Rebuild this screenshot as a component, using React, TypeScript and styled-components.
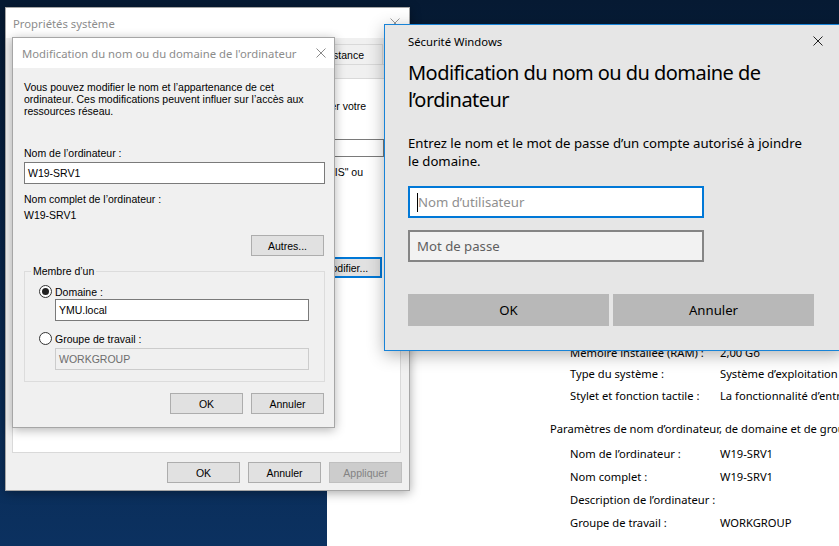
import React from "react";
import styled, { createGlobalStyle } from "styled-components";

const SEGOE = `"Noto Sans", "Open Sans", sans-serif`;
const CLASSIC = `"Liberation Sans", Arial, sans-serif`;

const GlobalStyle = createGlobalStyle`
  html, body { margin: 0; padding: 0; overflow: hidden; background: #0a2748; }
  *, *::before, *::after { box-sizing: border-box; }
`;

const Desktop = styled.div`
  position: relative;
  width: 839px;
  height: 546px;
  overflow: hidden;
  background: linear-gradient(180deg, #061a33 0%, #09264b 50%, #0b3160 100%);
`;

/* ---------------- generic bits ---------------- */
const CloseIcon = ({ color }: { color: string }) => (
  <svg width="10" height="10" viewBox="0 0 10 10" aria-hidden>
    <path d="M0.5 0.5 L9.5 9.5 M9.5 0.5 L0.5 9.5" stroke={color} strokeWidth="1" fill="none" />
  </svg>
);

const CloseBox = styled.span`
  display: inline-flex;
  width: 10px;
  height: 10px;
  flex: none;
`;

/* ---------------- background "Système" window ---------------- */
const SystemWindow = styled.section`
  position: absolute;
  left: 327px;
  top: 30px;
  width: 560px;
  height: 540px;
  background: #fff;
  font-family: ${SEGOE};
  font-size: 11.2px;
  color: #000;
  padding: 290px 0 0 223px;
  display: flex;
  flex-direction: column;
`;

const InfoRow = styled.div<{ $h: number }>`
  display: grid;
  grid-template-columns: 150px auto;
  height: ${(p) => p.$h}px;
  align-items: center;
  padding-left: 20px;
  white-space: nowrap;
`;

const InfoHeader = styled.div`
  height: 23px;
  line-height: 23px;
  margin: 11px 0 2px;
  white-space: nowrap;
`;

/* ---------------- classic dialog shared ---------------- */
const TitleBar = styled.div<{ $pl: number; $pr: number }>`
  flex: none;
  height: 30px;
  background: #fff;
  display: flex;
  align-items: center;
  justify-content: space-between;
  padding: 0 ${(p) => p.$pr}px 0 ${(p) => p.$pl}px;
`;

const TitleText = styled.span`
  font-family: ${SEGOE};
  font-size: 11.3px;
  color: #8c8c8c;
  white-space: nowrap;
`;

const Button = styled.div<{ $disabled?: boolean; $focused?: boolean }>`
  width: 73px;
  height: 21px;
  flex: none;
  display: flex;
  align-items: center;
  justify-content: center;
  background: ${(p) => (p.$disabled ? "#cccccc" : "#e1e1e1")};
  border: 1px solid ${(p) => (p.$focused ? "#0078d7" : p.$disabled ? "#bfbfbf" : "#adadad")};
  box-shadow: ${(p) => (p.$focused ? "inset 0 0 0 1px #0078d7" : "none")};
  color: ${(p) => (p.$disabled ? "#838383" : "#000")};
  font-family: ${CLASSIC};
  font-size: 10.5px;
`;

const ButtonRow = styled.div<{ $mt: number; $mr?: number }>`
  display: flex;
  justify-content: flex-end;
  gap: 8px;
  margin-top: ${(p) => p.$mt}px;
  margin-right: ${(p) => p.$mr ?? 0}px;
`;

const TextBox = styled.div<{ $w?: number; $h: number; $mt?: number; $disabled?: boolean }>`
  width: ${(p) => (p.$w ? `${p.$w}px` : "100%")};
  height: ${(p) => p.$h}px;
  margin-top: ${(p) => p.$mt ?? 0}px;
  flex: none;
  display: flex;
  align-items: center;
  padding-left: 3px;
  background: ${(p) => (p.$disabled ? "#f0f0f0" : "#fff")};
  border: 1px solid ${(p) => (p.$disabled ? "#cccccc" : "#7a7a7a")};
  color: ${(p) => (p.$disabled ? "#6d6d6d" : "#000")};
  font-family: ${CLASSIC};
  font-size: 10.5px;
  white-space: nowrap;
  overflow: hidden;
`;

const Label = styled.div<{ $mt: number }>`
  margin-top: ${(p) => p.$mt}px;
  line-height: 13px;
  height: 13px;
  white-space: nowrap;
`;

/* ---------------- Propriétés système ---------------- */
const PropsWindow = styled.section`
  position: absolute;
  left: 5px;
  top: 7px;
  width: 405px;
  height: 484px;
  background: #f0f0f0;
  border: 1px solid #a6a6a6;
  box-shadow: 0 2px 10px rgba(0, 0, 0, 0.35);
  display: flex;
  flex-direction: column;
  font-family: ${CLASSIC};
  font-size: 10.5px;
  color: #000;
`;

const PropsBody = styled.div`
  flex: 1;
  display: flex;
  flex-direction: column;
  padding: 6px 7px 0 6px;
`;

const TabRow = styled.div<{ $h: number; $pr: number; $justify: string }>`
  display: flex;
  justify-content: ${(p) => p.$justify};
  height: ${(p) => p.$h}px;
  padding-right: ${(p) => p.$pr}px;
`;

const Tab = styled.div<{ $selected?: boolean; $grow?: boolean; $padR?: number }>`
  flex: ${(p) => (p.$grow ? 1 : "none")};
  display: flex;
  align-items: center;
  padding: 0 ${(p) => p.$padR ?? 7}px 0 7px;
  background: ${(p) => (p.$selected ? "#fff" : "#f0f0f0")};
  border: 1px solid #d9d9d9;
  border-bottom: none;
  margin-right: -1px;
  white-space: nowrap;
  overflow: hidden;
`;

const TabPage = styled.div`
  height: 375px;
  margin-right: 1px;
  background: #fff;
  border: 1px solid #d9d9d9;
  display: flex;
  flex-direction: column;
  padding: 21px 18px 0 12px;
`;

const PageText = styled.div<{ $mt?: number; $mr: number }>`
  align-self: flex-end;
  margin-top: ${(p) => p.$mt ?? 0}px;
  margin-right: ${(p) => p.$mr}px;
  line-height: 13px;
  white-space: nowrap;
`;

const PageRow = styled.div<{ $mt: number }>`
  display: flex;
  align-items: center;
  justify-content: space-between;
  margin-top: ${(p) => p.$mt}px;
  white-space: nowrap;
`;

const SmallBox = styled.div`
  width: 222px;
  height: 18px;
  border: 1px solid #7a7a7a;
  background: #fff;
  margin-right: -2px;
`;

/* ---------------- Modification dialog ---------------- */
const ModWindow = styled.section`
  position: absolute;
  left: 12px;
  top: 37px;
  width: 323px;
  height: 391px;
  background: #f0f0f0;
  border: 1px solid #a6a6a6;
  box-shadow: 0 2px 10px rgba(0, 0, 0, 0.3);
  display: flex;
  flex-direction: column;
  font-family: ${CLASSIC};
  font-size: 10.5px;
  color: #000;
`;

const ModBody = styled.div`
  flex: 1;
  display: flex;
  flex-direction: column;
  padding: 13px 9px 0 11px;
`;

const Paragraph = styled.p`
  margin: 0;
  line-height: 12px;
  white-space: nowrap;
`;

const GroupBox = styled.fieldset`
  margin: 9px 0 0;
  padding: 7px 14px 11px;
  border: 1px solid #dcdcdc;
  min-width: 0;
  display: flex;
  flex-direction: column;
`;

const Legend = styled.legend`
  margin-left: -8px;
  padding: 0 2px;
  line-height: 13px;
  font-size: 10.5px;
`;

const RadioRow = styled.div<{ $mt: number }>`
  display: flex;
  align-items: center;
  gap: 3px;
  height: 13px;
  margin-top: ${(p) => p.$mt}px;
  white-space: nowrap;
`;

const Radio = styled.span<{ $checked?: boolean }>`
  width: 13px;
  height: 13px;
  flex: none;
  border-radius: 50%;
  border: 1px solid #333;
  background: #fff;
  display: inline-flex;
  align-items: center;
  justify-content: center;
  &::after {
    content: "";
    width: 7px;
    height: 7px;
    border-radius: 50%;
    background: #222;
    display: ${(p) => (p.$checked ? "block" : "none")};
  }
`;

const Indented = styled.div<{ $mt: number }>`
  margin-top: ${(p) => p.$mt}px;
  padding-left: 16px;
`;

/* ---------------- Sécurité Windows ---------------- */
const SecurityWindow = styled.section`
  position: absolute;
  left: 384px;
  top: 24px;
  width: 460px;
  height: 327px;
  background: #e6e6e6;
  border: 1px solid #1883d7;
  box-shadow: 0 4px 16px rgba(0, 0, 0, 0.3);
  display: flex;
  flex-direction: column;
  padding: 6px 20px 0 23px;
  font-family: ${SEGOE};
  color: #000;
`;

const SecTitleRow = styled.div`
  display: flex;
  align-items: center;
  justify-content: space-between;
  height: 20px;
  font-size: 11.3px;
`;

const SecHeading = styled.h1`
  margin: 8px 0 0;
  font-size: 20px;
  font-weight: 400;
  line-height: 27px;
  letter-spacing: -0.55px;
  white-space: nowrap;
`;

const SecText = styled.p`
  margin: 22px 0 0;
  font-size: 13.2px;
  line-height: 17.5px;
  white-space: nowrap;
`;

const SecInput = styled.div<{ $mt: number; $focused?: boolean }>`
  width: 296px;
  height: 32px;
  margin-top: ${(p) => p.$mt}px;
  display: flex;
  align-items: center;
  padding-left: 7px;
  background: ${(p) => (p.$focused ? "#fff" : "#f2f2f2")};
  border: 2px solid ${(p) => (p.$focused ? "#0078d7" : "#858585")};
  font-size: 13.2px;
  white-space: nowrap;
`;

const Caret = styled.span`
  width: 1px;
  height: 19px;
  background: #000;
  flex: none;
`;

const Placeholder = styled.span<{ $dark?: boolean }>`
  color: ${(p) => (p.$dark ? "#5f5f5f" : "#8f8f8f")};
`;

const SecButtons = styled.div`
  display: flex;
  gap: 4px;
  margin-top: 32px;
`;

const SecButton = styled.div`
  width: 201px;
  height: 32px;
  display: flex;
  align-items: center;
  justify-content: center;
  background: #b8b8b8;
  font-size: 13.2px;
`;

export default function App() {
  return (
    <>
      <GlobalStyle />
      <Desktop>
        <SystemWindow>
          <InfoRow $h={21.5}>
            <span>Processeur :</span>
            <span>Intel(R) Xeon(R) CPU</span>
          </InfoRow>
          <InfoRow $h={21.5}>
            <span>Mémoire installée (RAM) :</span>
            <span>2,00 Go</span>
          </InfoRow>
          <InfoRow $h={21.5}>
            <span>Type du système :</span>
            <span>Système d’exploitation 64 bits, processeur x64</span>
          </InfoRow>
          <InfoRow $h={21.5}>
            <span>Stylet et fonction tactile :</span>
            <span>La fonctionnalité d’entrée tactile ou avec un stylet n’est pas disponible</span>
          </InfoRow>
          <InfoHeader>Paramètres de nom d’ordinateur, de domaine et de groupe de travail</InfoHeader>
          <InfoRow $h={23}>
            <span>Nom de l’ordinateur :</span>
            <span>W19-SRV1</span>
          </InfoRow>
          <InfoRow $h={23}>
            <span>Nom complet :</span>
            <span>W19-SRV1</span>
          </InfoRow>
          <InfoRow $h={23}>
            <span>Description de l’ordinateur :</span>
            <span></span>
          </InfoRow>
          <InfoRow $h={23}>
            <span>Groupe de travail :</span>
            <span>WORKGROUP</span>
          </InfoRow>
        </SystemWindow>

        <PropsWindow>
          <TitleBar $pl={7} $pr={9}>
            <TitleText>Propriétés système</TitleText>
            <CloseBox>
              <CloseIcon color="#9a9a9a" />
            </CloseBox>
          </TitleBar>
          <PropsBody>
            <TabRow $h={20} $pr={20} $justify="flex-end">
              <Tab>Paramètres système avancés</Tab>
              <Tab $padR={18}>Utilisation à distance</Tab>
            </TabRow>
            <TabRow $h={14} $pr={0} $justify="stretch">
              <Tab $selected $grow>
                Nom de l’ordinateur
              </Tab>
              <Tab $grow>Matériel</Tab>
            </TabRow>
            <TabPage>
              <PageText $mr={16}>
                Windows utilise les informations suivantes pour identifier votre
                <br />
                ordinateur sur le réseau.
              </PageText>
              <PageRow $mt={13}>
                <span>Description de l’ordinateur :</span>
                <SmallBox />
              </PageRow>
              <PageText $mt={9} $mr={19}>
                Par exemple : "Serveur de production IIS" ou
                <br />
                "Serveur de comptabilité".
              </PageText>
              <PageRow $mt={65}>
                <span>Pour renommer cet ordinateur, cliquez sur Modifier.</span>
                <Button $focused>Modifier...</Button>
              </PageRow>
            </TabPage>
            <ButtonRow $mt={9}>
              <Button>OK</Button>
              <Button>Annuler</Button>
              <Button $disabled>Appliquer</Button>
            </ButtonRow>
          </PropsBody>
        </PropsWindow>

        <ModWindow>
          <TitleBar $pl={9} $pr={8}>
            <TitleText>Modification du nom ou du domaine de l'ordinateur</TitleText>
            <CloseBox>
              <CloseIcon color="#8a8a8a" />
            </CloseBox>
          </TitleBar>
          <ModBody>
            <Paragraph>
              Vous pouvez modifier le nom et l’appartenance de cet
              <br />
              ordinateur. Ces modifications peuvent influer sur l’accès aux
              <br />
              ressources réseau.
            </Paragraph>
            <Label $mt={30}>Nom de l’ordinateur :</Label>
            <TextBox $h={22} $mt={2}>
              W19-SRV1
            </TextBox>
            <Label $mt={9}>Nom complet de l’ordinateur :</Label>
            <Label $mt={3}>W19-SRV1</Label>
            <ButtonRow $mt={13} $mr={1}>
              <Button>Autres...</Button>
            </ButtonRow>
            <GroupBox>
              <Legend>Membre d’un</Legend>
              <RadioRow $mt={0}>
                <Radio $checked />
                <span>Domaine :</span>
              </RadioRow>
              <Indented $mt={1}>
                <TextBox $w={254} $h={22}>
                  YMU.local
                </TextBox>
              </Indented>
              <RadioRow $mt={11}>
                <Radio />
                <span>Groupe de travail :</span>
              </RadioRow>
              <Indented $mt={3}>
                <TextBox $w={254} $h={22} $disabled>
                  WORKGROUP
                </TextBox>
              </Indented>
            </GroupBox>
            <ButtonRow $mt={11} $mr={1}>
              <Button>OK</Button>
              <Button>Annuler</Button>
            </ButtonRow>
          </ModBody>
        </ModWindow>

        <SecurityWindow>
          <SecTitleRow>
            <span>Sécurité Windows</span>
            <CloseBox>
              <CloseIcon color="#222" />
            </CloseBox>
          </SecTitleRow>
          <SecHeading>
            Modification du nom ou du domaine de
            <br />
            l’ordinateur
          </SecHeading>
          <SecText>
            Entrez le nom et le mot de passe d’un compte autorisé à joindre
            <br />
            le domaine.
          </SecText>
          <SecInput $mt={16} $focused>
            <Caret />
            <Placeholder>Nom d’utilisateur</Placeholder>
          </SecInput>
          <SecInput $mt={12}>
            <Placeholder $dark>Mot de passe</Placeholder>
          </SecInput>
          <SecButtons>
            <SecButton>OK</SecButton>
            <SecButton>Annuler</SecButton>
          </SecButtons>
        </SecurityWindow>
      </Desktop>
    </>
  );
}
